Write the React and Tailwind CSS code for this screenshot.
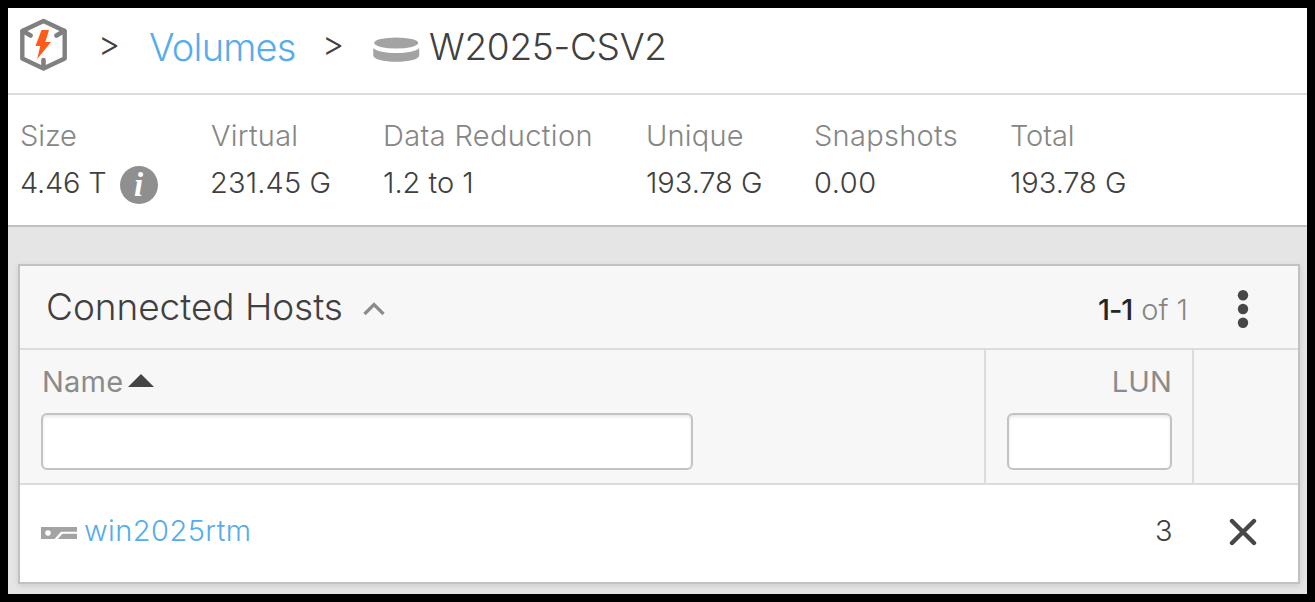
const stats = [
  { label: "Size", value: "4.46 T", info: true, col: "w-[190px]", labelCls: "tracking-[-0.1px]", valueCls: "tracking-[-0.2px]" },
  { label: "Virtual", value: "231.45 G", col: "w-[173px]", labelCls: "tracking-[0.25px] ml-px", valueCls: "tracking-[0.15px]" },
  { label: "Data Reduction", value: "1.2 to 1", col: "w-[263px]", labelCls: "tracking-[0.35px]", valueCls: "tracking-[0px]" },
  { label: "Unique", value: "193.78 G", col: "w-[168px]", labelCls: "tracking-[0.2px]", valueCls: "tracking-[-0.05px]" },
  { label: "Snapshots", value: "0.00", col: "w-[196px]", labelCls: "tracking-[0.3px]", valueCls: "tracking-[0.6px]" },
  { label: "Total", value: "193.78 G", col: "w-[200px]", labelCls: "tracking-[-0.1px]", valueCls: "tracking-[-0.05px]" },
];

function Logo() {
  return (
    <svg className="h-[53px] w-[48px] shrink-0" viewBox="0 0 48 53" fill="none">
      <path d="M23.5 3L44.7 13v27.5L23.5 50.5L2.3 40.5V13z" stroke="#808080" strokeWidth="4.4" strokeLinejoin="round" />
      <path d="M3 13l7.500 4.500M44 13l-7.500 4.500M23.500 50v-8" stroke="#808080" strokeWidth="4.6" strokeLinecap="round" />
      <path d="M21.500 12h7.500l-3.2 10.500-.8 1.500h6L17.200 41l3-13h-4.700z" fill="#ff5a19" />
    </svg>
  );
}

function VolumeIcon() {
  return (
    <svg className="h-[26px] w-[47px] shrink-0" viewBox="0 0 47 26" fill="#a3a3a3">
      <ellipse cx="23.2" cy="6" rx="22" ry="5.500" />
      <path d="M.3 11C3.5 14.300 12 16 23.2 16S43 14.300 46.2 11v7.5c0 3.8-10.3 6.3-23 6.3S.3 22.300.3 18.500z" />
    </svg>
  );
}

function HostIcon() {
  return (
    <svg className="h-[12px] w-[36px] shrink-0" viewBox="0 0 36 12">
      <path d="M0 0h36v4.800H20L13.500 12H0z" fill="#a3a3a3" />
      <path d="M21.500 6.700H36V12H16.800z" fill="#a3a3a3" />
      <circle cx="7" cy="6" r="2.800" fill="#fff" />
    </svg>
  );
}

export default function App() {
  return (
    <div className="flex h-[602px] w-[1315px] flex-col overflow-hidden border-8 border-black bg-[#e5e5e5] font-['Inter','Liberation_Sans',sans-serif] text-[29px] font-light leading-[36px] text-[#404040]">
      <header className="flex h-[87px] shrink-0 items-start border-b-2 border-[#dcdcdc] bg-white pl-3 pt-[10px]">
        <Logo />
        <span className="ml-[30px] mt-[8px] w-[51px] text-[34px]">&gt;</span>
        <a className="mt-[5px] w-[173px] text-[38px] leading-[48px] tracking-[-0.8px] text-[#56acec]">Volumes</a>
        <span className="mt-[8px] w-[51px] text-[34px]">&gt;</span>
        <span className="mt-[19px]">
          <VolumeIcon />
        </span>
        <h1 className="ml-[9px] mt-[5px] text-[37px] leading-[48px] tracking-[-0.3px]">W2025-CSV2</h1>
      </header>

      <section className="flex h-[132px] shrink-0 border-b-2 border-[#c1c1c1] bg-white pl-3 pt-[23px]">
        {stats.map((s) => (
          <div key={s.label} className={`shrink-0 whitespace-nowrap ${s.col}`}>
            <div className={`text-[#868686] ${s.labelCls}`}>{s.label}</div>
            <div className="mt-[11px] flex">
              <span className={s.valueCls}>{s.value}</span>
              {s.info && (
                <span className="ml-[13px] mt-px flex size-[38px] items-center justify-center rounded-full bg-[#8f8f8f] font-['Liberation_Serif',serif] text-[33px] font-bold italic leading-[38px] text-white">
                  i
                </span>
              )}
            </div>
          </div>
        ))}
      </section>

      <section className="ml-[10px] mt-[37px] h-[320px] w-[1282px] shrink-0 border-2 border-[#c1c1c1] bg-white shadow-[0_2px_6px_rgba(0,0,0,0.1)]">
        <div className="flex h-[84px] items-start border-b-2 border-[#dcdcdc] bg-[#f7f7f7] pl-[26px]">
          <h2 className="mt-[17px] w-[317px] text-[37px] leading-[48px] tracking-[-0.05px]">Connected Hosts</h2>
          <svg className="mt-[36px] h-[14px] w-[22px]" viewBox="0 0 22 14" fill="none">
            <path d="M1.500 12L11 2.500L20.500 12" stroke="#8c8c8c" strokeWidth="3.200" />
          </svg>
          <div className="ml-auto mt-[26px] flex gap-[9px] text-[#868686]">
            <span className="font-medium text-[#262626] tracking-[-1.1px]">1-1</span>
            <span className="tracking-[0px]">of 1</span>
          </div>
          <svg className="ml-[49px] mr-[49px] mt-[24px] h-[38px] w-[12px]" viewBox="0 0 12 38" fill="#474747">
            <circle cx="6" cy="5.300" r="5.200" />
            <circle cx="6" cy="19" r="5.200" />
            <circle cx="6" cy="32.800" r="5.200" />
          </svg>
        </div>

        <div className="flex h-[135px] border-b-2 border-[#dcdcdc] bg-[#f7f7f7] font-normal text-[#8b8b8b]">
          <div className="w-[966px] border-r-2 border-[#dcdcdc] pl-[21px] pt-[14px]">
            <div className="flex items-start">
              <span className="ml-px tracking-[0.2px]">Name</span>
              <svg className="ml-[5px] mt-[10px] h-[13px] w-[26px]" viewBox="0 0 26 13">
                <path d="M13 0L26 13H0z" fill="#444" />
              </svg>
            </div>
            <input className="mt-[13px] block h-[57px] w-[652px] rounded-[6px] border-2 border-[#c3c3c3] bg-white px-3 shadow-[inset_0_2px_3px_rgba(0,0,0,0.09)] outline-none" />
          </div>
          <div className="w-[208px] border-r-2 border-[#dcdcdc] pl-[21px] pr-[20px] pt-[14px]">
            <div className="text-right tracking-[0.1px]">LUN</div>
            <input className="mt-[13px] block h-[57px] w-[165px] rounded-[6px] border-2 border-[#c3c3c3] bg-white px-3 shadow-[inset_0_2px_3px_rgba(0,0,0,0.09)] outline-none" />
          </div>
        </div>

        <div className="flex h-[97px] items-start pl-[21px]">
          <span className="mt-[42px]">
            <HostIcon />
          </span>
          <a className="ml-[7px] mt-[28px] tracking-[0.45px] text-[#56acec]">win2025rtm</a>
          <span className="ml-auto mt-[28px] w-[18px]">3</span>
          <svg className="ml-[56px] mr-[41px] mt-[33px] h-[28px] w-[28px]" viewBox="0 0 28 28" fill="none">
            <path d="M3 3L25 25M25 3L3 25" stroke="#474747" strokeWidth="4.400" strokeLinecap="round" />
          </svg>
        </div>
      </section>
    </div>
  );
}
